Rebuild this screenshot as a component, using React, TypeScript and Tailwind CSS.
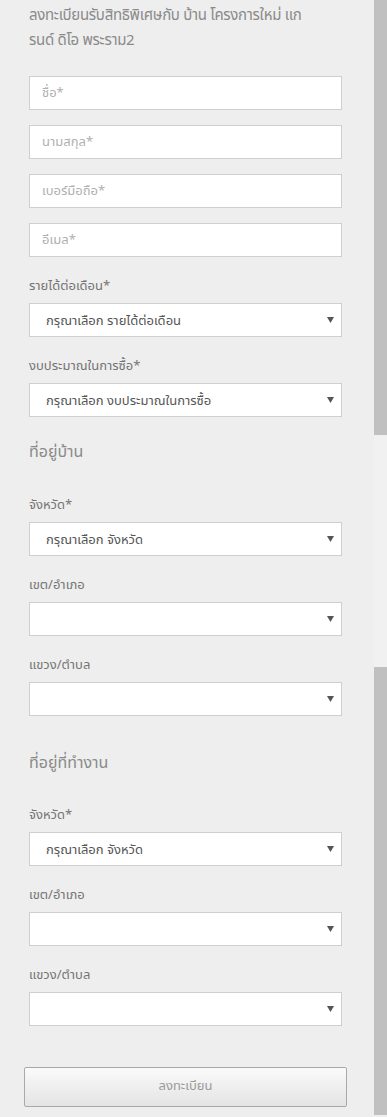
import React from "react";

const font = { fontFamily: "Tahoma, 'Noto Sans Thai', 'Noto Sans', sans-serif" };

const TextField = ({ placeholder }: { placeholder: string }) => (
	<input
		type="text"
		placeholder={placeholder}
		className="h-[34px] w-full border border-[#cfcfcf] bg-white px-3 text-[13px] text-[#555] placeholder:text-[#b0b0b0] outline-none"
	/>
);

const SelectField = ({ label, value }: { label: string; value?: string }) => (
	<div className="flex flex-col">
		<label className="mt-[19px] mb-[7px] h-5 text-[13px] leading-5 text-[#747474]">{label}</label>
		<div className="relative h-[34px] border border-[#cfcfcf] bg-white">
			<select className="h-full w-full appearance-none bg-transparent pl-4 pr-8 pt-[3px] text-[13px] text-[#555] outline-none">
				<option>{value ?? ""}</option>
			</select>
			<svg className="pointer-events-none absolute right-[7px] top-[13px]" width="7" height="6" viewBox="0 0 7 6">
				<path d="M0 0 H7 L3.5 6 Z" fill="#555" />
			</svg>
		</div>
	</div>
);

const App: React.FC = () => {
	return (
		<div className="flex min-h-[1117px] w-[387px] bg-[#eeeeee]" style={font}>
			<div className="flex w-[374px] flex-col pl-[29px] pr-[32px] pb-[10px]">
				<h2 className="whitespace-nowrap pt-[3px] text-[15px] leading-[25px] tracking-[-0.3px] text-[#8a8a8a]">
					ลงทะเบียนรับสิทธิพิเศษกับ บ้าน โครงการใหม่ แก
					<br />
					รนด์ ดิโอ พระราม2
				</h2>

				<div className="mt-[23px] flex flex-col gap-[15px]">
					<TextField placeholder="ชื่อ*" />
					<TextField placeholder="นามสกุล*" />
					<TextField placeholder="เบอร์มือถือ*" />
					<TextField placeholder="อีเมล*" />
				</div>

				<SelectField label="รายได้ต่อเดือน*" value="กรุณาเลือก รายได้ต่อเดือน" />
				<SelectField label="งบประมาณในการซื้อ*" value="กรุณาเลือก งบประมาณในการซื้อ" />

				<h3 className="mt-[23px] mb-[11px] text-[16px] leading-[25px] text-[#8a8a8a]">ที่อยู่บ้าน</h3>
				<SelectField label="จังหวัด*" value="กรุณาเลือก จังหวัด" />
				<SelectField label="เขต/อำเภอ" />
				<SelectField label="แขวง/ตำบล" />

				<h3 className="mt-[35px] mb-[10px] text-[16px] leading-[25px] text-[#8a8a8a]">ที่อยู่ที่ทำงาน</h3>
				<SelectField label="จังหวัด*" value="กรุณาเลือก จังหวัด" />
				<SelectField label="เขต/อำเภอ" />
				<SelectField label="แขวง/ตำบล" />

				<button
					type="submit"
					className="-mx-[5px] mt-[41px] h-10 rounded-[2px] border border-[#a9a9a9] bg-gradient-to-b from-[#fafafa] to-[#e4e4e4] text-[13px] text-[#9a9a9a]"
				>
					ลงทะเบียน
				</button>
			</div>

			<div className="flex w-[13px] flex-col">
				<div className="h-[435px] bg-[#c0c0c0]"></div>
				<div className="h-[232px] bg-[#f1f1f1]"></div>
				<div className="h-[448px] bg-[#c0c0c0]"></div>
			</div>
		</div>
	);
};

export default App;
